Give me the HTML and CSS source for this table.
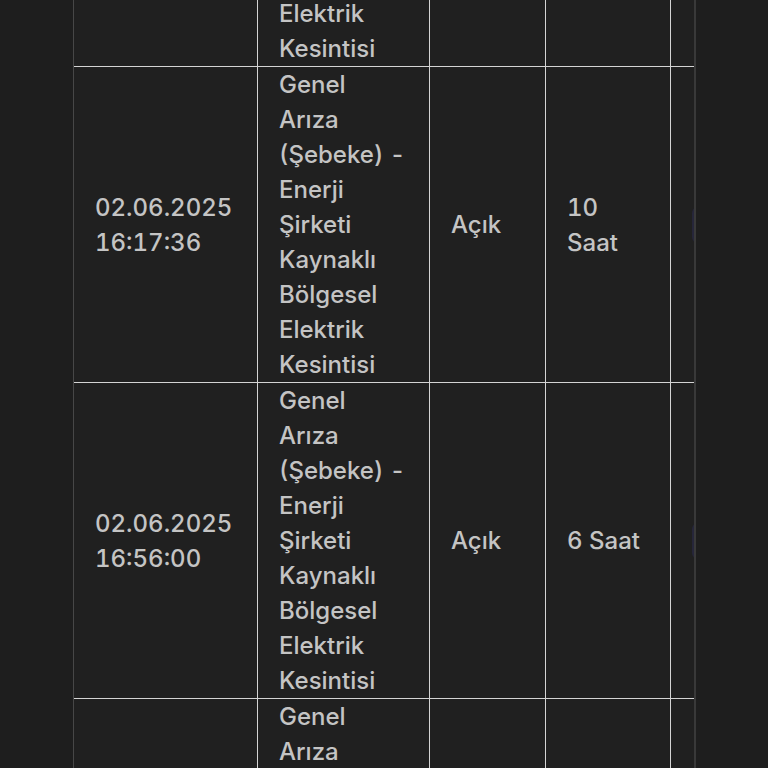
FILE: index.html
```
<!DOCTYPE html>
<html lang="tr">
<head>
<meta charset="utf-8">
<title>Arıza Kayıtları</title>
<link rel="stylesheet" href="styles.css">
</head>
<body>
<div class="scroller">
  <div class="grid">
    <div class="cell">02.06.2025 15:42:10</div>
    <div class="cell">Genel Arıza (Şebeke) - Enerji Şirketi Kaynaklı Bölgesel Elektrik Kesintisi</div>
    <div class="cell">Açık</div>
    <div class="cell">8 Saat</div>
    <div class="cell"><button class="btn">Detay</button></div>

    <div class="cell">02.06.2025 16:17:36</div>
    <div class="cell">Genel Arıza (Şebeke) - Enerji Şirketi Kaynaklı Bölgesel Elektrik Kesintisi</div>
    <div class="cell">Açık</div>
    <div class="cell">10 Saat</div>
    <div class="cell"><button class="btn">Detay</button></div>

    <div class="cell">02.06.2025 16:56:00</div>
    <div class="cell">Genel Arıza (Şebeke) - Enerji Şirketi Kaynaklı Bölgesel Elektrik Kesintisi</div>
    <div class="cell">Açık</div>
    <div class="cell">6 Saat</div>
    <div class="cell"><button class="btn">Detay</button></div>

    <div class="cell">02.06.2025 17:20:45</div>
    <div class="cell">Genel Arıza (Şebeke) - Enerji Şirketi Kaynaklı Bölgesel Elektrik Kesintisi</div>
    <div class="cell">Açık</div>
    <div class="cell">4 Saat</div>
    <div class="cell"><button class="btn">Detay</button></div>
  </div>
</div>
</body>
</html>
```
FILE: styles.css
```
html, body {
  margin: 0;
  height: 100%;
  background: #1e1e1e;
  overflow: hidden;
}
body {
  font-family: Inter, "Liberation Sans", sans-serif;
  font-size: 24px;
  font-weight: 500;
  line-height: 35px;
  color: #c4c4c4;
  font-variant-numeric: tabular-nums;
}
.scroller {
  margin-left: 73px;
  width: 620px;
  height: 768px;
  overflow: hidden;
  border-left: 1px solid #474747;
  border-right: 2px solid #393939;
  background: #202020;
}
.grid {
  display: grid;
  grid-template-columns: 184px 172px 116px 125px 200px;
  margin-top: -249px;
}
.cell {
  box-sizing: border-box;
  display: flex;
  align-items: center;
  padding: 0 21px;
  border-right: 1px solid #d4d4d4;
  border-bottom: 1px solid #d4d4d4;
}
.btn {
  font: inherit;
  font-size: 16px;
  line-height: 20px;
  padding: 8px 16px;
  border: 0;
  border-radius: 6px;
  background: #26263a;
  color: #26263a;
}
```
